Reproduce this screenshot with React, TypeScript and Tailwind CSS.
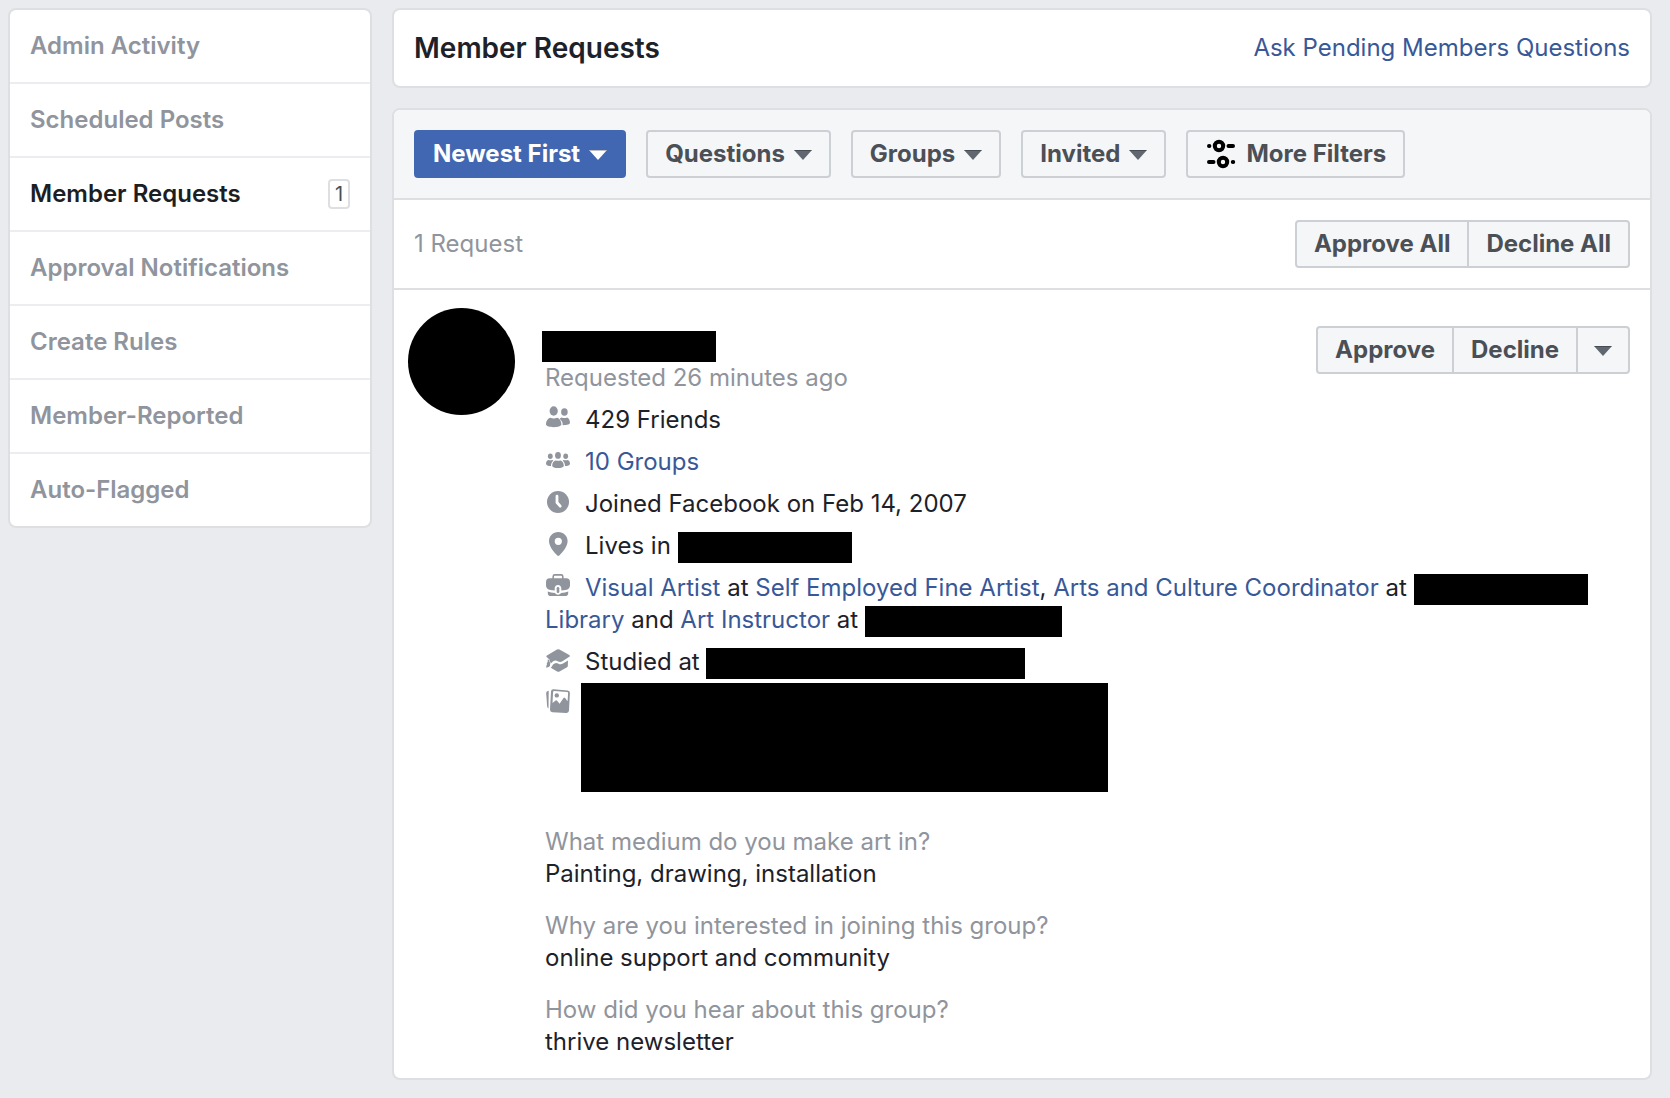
import React from "react";

const navItems = [
  { label: "Admin Activity" },
  { label: "Scheduled Posts" },
  { label: "Member Requests", count: 1, active: true },
  { label: "Approval Notifications" },
  { label: "Create Rules" },
  { label: "Member-Reported" },
  { label: "Auto-Flagged" },
];

const filters = ["Questions", "Groups", "Invited"];

const answers = [
  { question: "What medium do you make art in?", answer: "Painting, drawing, installation" },
  { question: "Why are you interested in joining this group?", answer: "online support and community" },
  { question: "How did you hear about this group?", answer: "thrive newsletter" },
];

const buttonBase = "flex h-12 items-center gap-[9px] border-2 font-bold whitespace-nowrap";
const grayButton = "border-[#ccd0d5] bg-[#f5f6f7] text-[#4b4f56]";

const Caret = ({ className = "text-[#606770]" }: { className?: string }) => (
  <svg viewBox="0 0 18 10" className={`mt-0.5 h-2.5 w-[18px] ${className}`} fill="currentColor" aria-hidden="true">
    <path d="M0 0h18L9 10z" />
    <path d="M0 0h18l-1 1H1z" fill="#000" fillOpacity="0.25" />
  </svg>
);

const SlidersIcon = () => (
  <svg viewBox="0 0 32 32" className="h-8 w-8" fill="none" stroke="#000" strokeWidth="4" aria-hidden="true">
    <circle cx="14" cy="8" r="4.2" />
    <circle cx="18" cy="24" r="4.2" />
    <path d="M4 8h.4M23.5 8H28M4 24h4.5M27.8 24h.4" strokeLinecap="round" />
  </svg>
);

const InfoIcon = ({ className = "mr-[15px] inline-block align-[-2px]", children }: { className?: string; children: React.ReactNode }) => (
  <svg viewBox="0 0 24 24" className={`ml-px h-6 w-6 shrink-0 fill-[#90949c] ${className}`} aria-hidden="true">
    {children}
  </svg>
);

const FriendsIcon = () => (
  <InfoIcon>
    <ellipse cx="7.7" cy="5" rx="4.1" ry="4.7" />
    <path d="M4.2 11.8q3.5 1.4 7 0c2.2.5 4.2 3.5 4.2 6.5C15.4 20.2 11.5 21.2 7.7 21.2S0 20.2 0 18.3C0 15.3 2 12.3 4.2 11.8z" />
    <ellipse cx="18.4" cy="6" rx="3.3" ry="3.8" />
    <path d="M15.7 11.6q2.7 1 5.4 0c1.7.5 2.9 2.7 2.9 5.2 0 1.6-3.2 2.5-7.3 2.4.2-2.6-.9-4.7-3-6.2.5-.8 1.1-1.2 2-1.4z" />
  </InfoIcon>
);

const GroupsIcon = () => (
  <InfoIcon>
    <ellipse cx="12" cy="7.4" rx="2.9" ry="3.4" />
    <path d="M9.4 12.4q2.6.9 5.2 0c1.8.5 3.2 2.8 3.2 5 0 1.8-2.8 2.6-5.8 2.6s-5.8-.8-5.8-2.6c0-2.2 1.4-4.5 3.2-5z" />
    <ellipse cx="4.3" cy="8.2" rx="2.4" ry="2.7" />
    <ellipse cx="19.7" cy="8.2" rx="2.4" ry="2.7" />
    <path d="M2.3 12q2 .7 4 0 .6.2 1 .5c-1.5 1.4-2.3 3.2-2.3 5.5-2.8 0-5-.6-5-2.3 0-1.7 1-3.4 2.3-3.7z" />
    <path d="M21.7 12q-2 .7-4 0-.6.2-1 .5c1.5 1.4 2.3 3.2 2.3 5.5 2.8 0 5-.6 5-2.3 0-1.7-1-3.4-2.3-3.7z" />
  </InfoIcon>
);

const ClockIcon = () => (
  <InfoIcon>
    <circle cx="12" cy="12" r="11" />
    <path d="M11 6.2v6.3l3.2 3.7" fill="none" stroke="#fff" strokeWidth="2.8" strokeLinecap="round" strokeLinejoin="round" />
  </InfoIcon>
);

const PinIcon = () => (
  <InfoIcon>
    <path
      fillRule="evenodd"
      d="M12.3 0C7 0 3 4 3 9.1c0 5.2 4.7 11 8.3 14.4q1 .8 2 0C16.9 20.1 21.6 14.3 21.6 9.1 21.6 4 17.6 0 12.3 0zm0 5.7a3.6 3.6 0 1 1 0 7.2 3.6 3.6 0 0 1 0-7.2z"
    />
  </InfoIcon>
);

const WorkIcon = () => (
  <InfoIcon>
    <path d="M7.2 5V2.5Q7.2.9 8.8.9h6.4q1.6 0 1.6 1.6V5" fill="none" stroke="#90949c" strokeWidth="1.6" />
    <path d="M3.5 4.2h17C22.7 4.2 24 5.7 24 8v3.5c0 2.2-1.6 4-4.5 4.5l-4.2.6v-2.3c0-2-1.3-3.3-3.3-3.3s-3.3 1.3-3.3 3.3v2.3L4.5 16C1.6 15.5 0 13.7 0 11.5V8c0-2.3 1.3-3.8 3.5-3.8z" />
    <rect x="10.7" y="13" width="2.6" height="6" rx="1.3" />
    <path d="M1.8 17.6q3 1.3 7.1 1.5.9 1.7 3.1 1.7t3.1-1.7q4.1-.2 7.1-1.5v1.6c0 1.7-1.2 2.9-2.9 2.9H4.7c-1.7 0-2.9-1.2-2.9-2.9z" />
  </InfoIcon>
);

const SchoolIcon = () => (
  <InfoIcon>
    <path d="M11 1.5q1.2-.6 2.4 0l9.9 5.6q1.2.8 0 1.7l-7.3 4.7q-2 1-4.2-.3-2.6-1.5-5 .4l-1.4 1.4-1.2-.6-.3-2.4L.9 9.3Q-.3 8.3.9 7.5z" />
    <path d="M7 16.6q2.6-2.6 5-1.2 2.6 1.6 5 .2l5-3-.2 5.3q0 .8-.8 1.3l-7.5 4.3q-1.2.6-2.4 0l-6.3-3.7q1.4-1.3 2.2-3.2z" />
    <path d="M1.7 11.5v2.6Q.2 15.2 1 16.3.1 17.8.2 19.7l2.7-.8q1.6-1 1.2-2.6 1-1.4-.6-2.3v-2z" />
  </InfoIcon>
);

const PhotosIcon = () => (
  <InfoIcon className="mt-1.5">
    <path d="M2.7 1.8 1.8 1.9Q.1 2.200.2 4L1.1 17Q1.3 19.1 2.5 19.4z" />
    <path
      fillRule="evenodd"
      d="M7.6.2 21.6 1.5Q24 1.8 23.9 4.1L23 21.5Q22.8 24 20.4 23.9L6.4 23.3Q4 23.1 4 20.7L5 2.5Q5.2 0 7.6.2zM8.2 2q-1 0-1.1 1.1L6.5 14l3.1-2.500q.8-.6 1.5.2l2.5 3 3.900-5.600q.8-1 1.600-.1l2.500 3.200.5-8q0-1.100-1-1.200z"
    />
    <circle cx="10.8" cy="6.4" r="2.2" />
  </InfoIcon>
);

const Redacted = ({ className }: { className: string }) => (
  <span className={`-my-1 inline-block h-[31px] bg-black align-[-5px] ${className}`} />
);

const InfoLink = ({ children }: { children: React.ReactNode }) => (
  <a href="#" className="text-[#385898] hover:underline">
    {children}
  </a>
);

const Sidebar = () => (
  <nav className="w-[364px] shrink-0 self-start divide-y-2 divide-[#ebedf0] rounded-lg border-2 border-[#dddfe2] bg-white">
    {navItems.map((item) => (
      <a
        key={item.label}
        href="#"
        className={`flex h-[74px] items-center justify-between px-5 font-semibold last:h-[72px] ${
          item.active ? "text-[#1c1e21]" : "text-[#90949c]"
        }`}
      >
        {item.label}
        {item.count && (
          <span className="flex h-[30px] w-[22px] items-center justify-center rounded border-2 border-[#dddfe2] text-xl font-normal text-[#4b4f56]">
            {item.count}
          </span>
        )}
      </a>
    ))}
  </nav>
);

const MemberRequest = () => (
  <article className="flex gap-[30px] pt-[18px] pr-5 pb-5 pl-3.5">
    <div className="h-[107px] w-[107px] shrink-0 rounded-full bg-black" />
    <div className="min-w-0 flex-1 pt-[18px] leading-8">
      <div className="flex items-start justify-between">
        <div className="pt-[5px]">
          <div className="-ml-[3px] h-[31px] w-[174px] bg-black" />
          <p className="text-[#90949c]">Requested 26 minutes ago</p>
        </div>
        <div className="flex">
          <button className={`${buttonBase} ${grayButton} rounded-l px-[17px]`}>Approve</button>
          <button className={`${buttonBase} ${grayButton} -ml-0.5 px-[17px]`}>Decline</button>
          <button className={`${buttonBase} ${grayButton} -ml-0.5 rounded-r px-4`} aria-label="More options">
            <Caret />
          </button>
        </div>
      </div>

      <ul className="mt-2.5 space-y-2.5">
        <li>
          <FriendsIcon />
          429 Friends
        </li>
        <li>
          <GroupsIcon />
          <InfoLink>10 Groups</InfoLink>
        </li>
        <li>
          <ClockIcon />
          Joined Facebook on Feb 14, 2007
        </li>
        <li>
          <PinIcon />
          Lives in <Redacted className="w-[174px]" />
        </li>
        <li>
          <WorkIcon />
          <InfoLink>Visual Artist</InfoLink> at <InfoLink>Self Employed Fine Artist</InfoLink>,{" "}
          <InfoLink>Arts and Culture Coordinator</InfoLink> at <Redacted className="w-[174px]" />{" "}
          <InfoLink>Library</InfoLink> and <InfoLink>Art Instructor</InfoLink> at <Redacted className="w-[197px]" />
        </li>
        <li>
          <SchoolIcon />
          Studied at <Redacted className="w-[319px]" />
        </li>
      </ul>
      <div className="mt-[5px] flex gap-[11px]">
        <PhotosIcon />
        <div className="h-[109px] w-[527px] bg-black" />
      </div>

      {/* Answers to the membership questions */}
      <dl className="mt-[34px] space-y-5">
        {answers.map((item) => (
          <div key={item.question}>
            <dt className="text-[#90949c]">{item.question}</dt>
            <dd>{item.answer}</dd>
          </div>
        ))}
      </dl>
    </div>
  </article>
);

const App = () => {
  return (
    <div className="flex min-h-screen gap-5 bg-[#e9ebee] pt-2 pr-[18px] pb-[18px] pl-2 font-['Inter',sans-serif] text-2xl text-[#1d2129]">
      <Sidebar />

      <main className="flex min-w-0 flex-1 flex-col gap-5 self-start">
        <header className="flex h-20 items-center justify-between rounded-lg border-2 border-[#dddfe2] bg-white px-5">
          <h1 className="pt-0.5 text-[28px] font-semibold">Member Requests</h1>
          <InfoLink>Ask Pending Members Questions</InfoLink>
        </header>

        <section className="overflow-hidden rounded-lg border-2 border-[#dddfe2] bg-white">
          <div className="flex gap-5 border-b-2 border-[#dddfe2] bg-[#f5f6f7] px-5 py-5">
            <button className={`${buttonBase} rounded border-[#4267b2] bg-[#4267b2] px-[17px] text-white`}>
              Newest First
              <Caret className="text-white" />
            </button>
            {filters.map((filter) => (
              <button key={filter} className={`${buttonBase} ${grayButton} rounded px-[17px]`}>
                {filter}
                <Caret />
              </button>
            ))}
            <button className={`${buttonBase} ${grayButton} rounded px-[17px]`}>
              <SlidersIcon />
              More Filters
            </button>
          </div>

          <div className="flex items-center justify-between border-b-2 border-[#dddfe2] px-5 py-5">
            <p className="text-[#90949c]">1 Request</p>
            <div className="flex">
              <button className={`${buttonBase} ${grayButton} rounded-l px-[17px]`}>Approve All</button>
              <button className={`${buttonBase} ${grayButton} -ml-0.5 rounded-r px-[17px]`}>Decline All</button>
            </div>
          </div>

          <MemberRequest />
        </section>
      </main>
    </div>
  );
};

export default App;
